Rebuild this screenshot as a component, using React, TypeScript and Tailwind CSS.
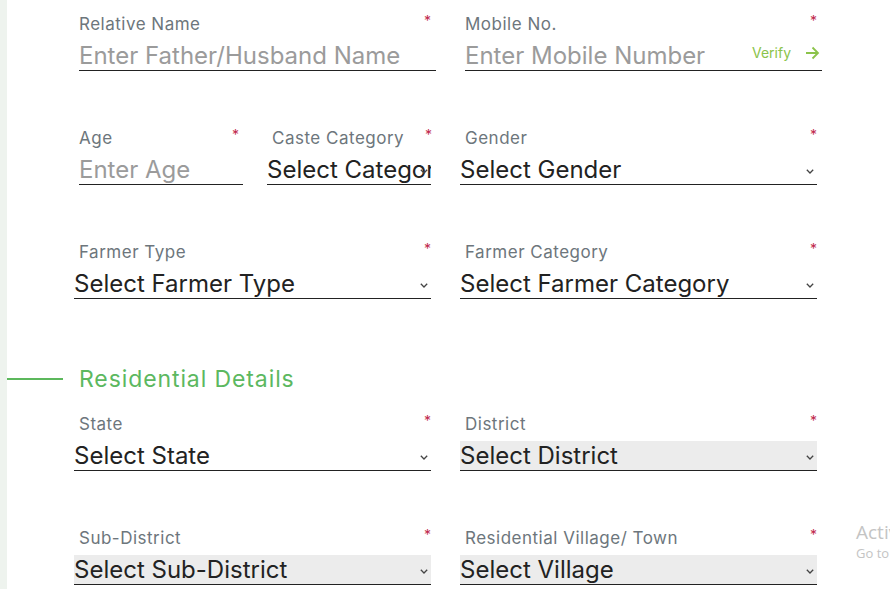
import React from "react";

const FONT = { fontFamily: "Inter, 'Open Sans', sans-serif" };

function Chevron() {
  return (
    <svg width="8" height="5" viewBox="0 0 8 5" className="absolute right-[3px] top-[14px]">
      <path d="M0.8 0.8 L4 4 L7.2 0.8" fill="none" stroke="#444" strokeWidth="1.3" />
    </svg>
  );
}

function Label({ text, narrow }: { text: string; narrow?: boolean }) {
  return (
    <div className="flex h-[24px] items-center justify-between">
      <span className="text-[17px] leading-[24px] tracking-[0.5px] text-[#6d767c]">{text}</span>
      <span className={`text-[14px] leading-none text-[#c0284c] -mt-[6px] ${narrow ? "mr-[4px]" : "mr-[5px]"}`}>*</span>
    </div>
  );
}

function TextField({ label, placeholder, w = "w-[357px]", verify }: { label: string; placeholder: string; w?: string; verify?: boolean }) {
  return (
    <div className={`flex flex-col ${w}`}>
      <Label text={label} narrow={w !== "w-[357px]"} />
      <div className="mt-[5px] flex h-[30px] items-center border-b border-[#222]">
        <span className="flex-1 whitespace-nowrap text-[24px] leading-[29px] text-[#9b9b9b]">{placeholder}</span>
        {verify && (
          <div className="flex items-center gap-[14px] pr-[2px] -mt-[6px]">
            <span className="text-[14px] text-[#8bc34a]">Verify</span>
            <svg width="15" height="14" viewBox="0 0 15 14">
              <path d="M1 7 H13 M7.5 1.5 L13 7 L7.5 12.5" fill="none" stroke="#8bc34a" strokeWidth="1.8" />
            </svg>
          </div>
        )}
      </div>
    </div>
  );
}

function SelectField({ label, value, w = "w-[357px]", disabled }: { label: string; value: string; w?: string; disabled?: boolean }) {
  return (
    <div className={`flex flex-col ${w}`}>
      <Label text={label} narrow={w !== "w-[357px]"} />
      <div
        className={`relative mt-[5px] -ml-[5px] mr-[5px] h-[30px] overflow-hidden border-b border-[#222] ${disabled ? "bg-[#ececec]" : ""}`}
      >
        <div className="whitespace-nowrap text-[24px] leading-[29px] text-[#222]">{value}</div>
        <Chevron />
      </div>
    </div>
  );
}

export default function App() {
  return (
    <div className="relative flex h-[589px] w-[890px] overflow-hidden bg-white" style={FONT}>
      <div className="w-[7px] shrink-0 bg-[#eef3ee]" />
      <div className="flex flex-col pl-[72px] pt-[12px]">
        <div className="flex gap-[29px]">
          <TextField label="Relative Name" placeholder="Enter Father/Husband Name" />
          <TextField label="Mobile No." placeholder="Enter Mobile Number" verify />
        </div>
        <div className="mt-[55px] flex gap-[29px]">
          <div className="flex w-[357px] gap-[29px]">
            <TextField label="Age" placeholder="Enter Age" w="w-[164px]" />
            <SelectField label="Caste Category" value="Select Category" w="w-[164px]" />
          </div>
          <SelectField label="Gender" value="Select Gender" />
        </div>
        <div className="mt-[55px] flex gap-[29px]">
          <SelectField label="Farmer Type" value="Select Farmer Type" />
          <SelectField label="Farmer Category" value="Select Farmer Category" />
        </div>
        <div className="relative mt-[65px] flex h-[30px] items-center">
          <div className="absolute left-[-72px] top-[14px] h-[2px] w-[56px] bg-[#5cb85c]" />
          <span className="text-[23px] tracking-[0.9px] text-[#5cb860]">Residential Details</span>
        </div>
        <div className="mt-[18px] flex gap-[29px]">
          <SelectField label="State" value="Select State" />
          <SelectField label="District" value="Select District" disabled />
        </div>
        <div className="mt-[55px] flex gap-[29px]">
          <SelectField label="Sub-District" value="Select Sub-District" disabled />
          <SelectField label="Residential Village/ Town" value="Select Village" disabled />
        </div>
      </div>
      <div className="absolute left-[856px] top-[520px] whitespace-nowrap text-[#c4c4c4]" style={{ fontFamily: "'Open Sans', sans-serif" }}>
        <div className="text-[19px] leading-[24px]">Activate Windows</div>
        <div className="text-[13px] leading-[18px]">Go to Settings to activate Windows.</div>
      </div>
    </div>
  );
}
